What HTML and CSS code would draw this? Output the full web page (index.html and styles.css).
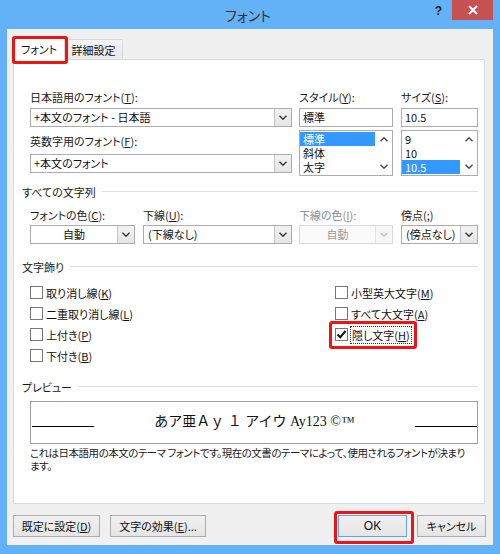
FILE: index.html
```html
<!DOCTYPE html>
<html lang="ja">
<head>
<meta charset="utf-8">
<title>フォント</title>
<link rel="stylesheet" href="styles.css">
</head>
<body>
<div class="window">
  <div class="titlebar">
    <div></div>
    <div class="title">フォント</div>
    <div class="controls">
      <span class="help">?</span>
      <span class="close"><svg width="10" height="10" viewBox="0 0 10 10"><path d="M1 1L9 9M9 1L1 9" stroke="#fff" stroke-width="2" fill="none"/></svg></span>
    </div>
  </div>
  <div class="client">
    <div class="tabs">
      <div class="tab active">フォント<span class="hl hl-tab"></span></div>
      <div class="tab">詳細設定</div>
    </div>
    <div class="panel">
      <div class="fontgrid">
        <div class="col col-font">
          <div class="label">日本語用のフォント(<u>T</u>):</div>
          <div class="combo mt4"><span class="value">+本文のフォント - 日本語</span><span class="arrow"><svg width="8" height="5" viewBox="0 0 8 5"><polyline points="0.5,0.7 4,4.2 7.5,0.7" fill="none" stroke="#333" stroke-width="1.4"/></svg></span></div>
          <div class="label mt7">英数字用のフォント(<u>F</u>):</div>
          <div class="combo mt6"><span class="value">+本文のフォント</span><span class="arrow"><svg width="8" height="5" viewBox="0 0 8 5"><polyline points="0.5,0.7 4,4.2 7.5,0.7" fill="none" stroke="#333" stroke-width="1.4"/></svg></span></div>
        </div>
        <div class="col col-style">
          <div class="label">スタイル(<u>Y</u>):</div>
          <div class="textbox mt4">標準</div>
          <div class="listbox">
            <div class="items">
              <div class="item sel">標準</div>
              <div class="item">斜体</div>
              <div class="item">太字</div>
            </div>
            <div class="scroll">
              <span class="sbtn"><svg width="8" height="5" viewBox="0 0 8 5"><polyline points="0.5,4.3 4,0.8 7.5,4.3" fill="none" stroke="#444" stroke-width="1.4"/></svg></span>
              <span class="sbtn"><svg width="8" height="5" viewBox="0 0 8 5"><polyline points="0.5,0.7 4,4.2 7.5,0.7" fill="none" stroke="#444" stroke-width="1.4"/></svg></span>
            </div>
          </div>
        </div>
        <div class="col col-size">
          <div class="label">サイズ(<u>S</u>):</div>
          <div class="textbox mt4">10.5</div>
          <div class="listbox">
            <div class="items">
              <div class="item">9</div>
              <div class="item">10</div>
              <div class="item sel">10.5</div>
            </div>
            <div class="scroll">
              <span class="sbtn"><svg width="8" height="5" viewBox="0 0 8 5"><polyline points="0.5,4.3 4,0.8 7.5,4.3" fill="none" stroke="#444" stroke-width="1.4"/></svg></span>
              <span class="sbtn"><svg width="8" height="5" viewBox="0 0 8 5"><polyline points="0.5,0.7 4,4.2 7.5,0.7" fill="none" stroke="#444" stroke-width="1.4"/></svg></span>
            </div>
          </div>
        </div>
      </div>

      <div class="heading h-all">すべての文字列</div>
      <div class="row4">
        <div class="field f-color">
          <div class="label">フォントの色(<u>C</u>):</div>
          <div class="combo mt3"><span class="value center">自動</span><span class="arrow"><svg width="8" height="5" viewBox="0 0 8 5"><polyline points="0.5,0.7 4,4.2 7.5,0.7" fill="none" stroke="#333" stroke-width="1.4"/></svg></span></div>
        </div>
        <div class="field f-under">
          <div class="label">下線(<u>U</u>):</div>
          <div class="combo mt3"><span class="value pad">(下線なし)</span><span class="arrow"><svg width="8" height="5" viewBox="0 0 8 5"><polyline points="0.5,0.7 4,4.2 7.5,0.7" fill="none" stroke="#333" stroke-width="1.4"/></svg></span></div>
        </div>
        <div class="field f-ucolor">
          <div class="label disabled">下線の色(<u>I</u>):</div>
          <div class="combo mt3 off"><span class="value center">自動</span><span class="arrow"><svg width="8" height="5" viewBox="0 0 8 5"><polyline points="0.5,0.7 4,4.2 7.5,0.7" fill="none" stroke="#c4c4c4" stroke-width="1.4"/></svg></span></div>
        </div>
        <div class="field f-dot">
          <div class="label">傍点(<u>;</u>)</div>
          <div class="combo mt3"><span class="value pad">(傍点なし)</span><span class="arrow"><svg width="8" height="5" viewBox="0 0 8 5"><polyline points="0.5,0.7 4,4.2 7.5,0.7" fill="none" stroke="#333" stroke-width="1.4"/></svg></span></div>
        </div>
      </div>

      <div class="heading h-deco">文字飾り</div>
      <div class="checks">
        <div class="ccol ccol-left">
          <div class="check"><span class="box"></span><span class="ctext">取り消し線(<u>K</u>)</span></div>
          <div class="check"><span class="box"></span><span class="ctext">二重取り消し線(<u>L</u>)</span></div>
          <div class="check"><span class="box"></span><span class="ctext">上付き(<u>P</u>)</span></div>
          <div class="check"><span class="box"></span><span class="ctext">下付き(<u>B</u>)</span></div>
        </div>
        <div class="ccol">
          <div class="check"><span class="box"></span><span class="ctext">小型英大文字(<u>M</u>)</span></div>
          <div class="check"><span class="box"></span><span class="ctext">すべて大文字(<u>A</u>)</span></div>
          <div class="check hidden-text"><span class="box"><svg width="11" height="11" viewBox="0 0 11 11"><polyline points="1.5,5.5 4.2,8.3 9.5,2" fill="none" stroke="#111" stroke-width="2"/></svg></span><span class="ctext focus">隠し文字(<u>H</u>)</span><span class="hl hl-check"></span></div>
        </div>
      </div>

      <div class="heading h-prev">プレビュー</div>
      <div class="preview">
        <span class="pline"></span>
        <span class="ptext">あア亜Ａｙ １ アイウ Ay123 ©™</span>
        <span class="pline"></span>
      </div>
      <div class="desc">これは日本語用の本文のテーマ フォントです。現在の文書のテーマによって、使用されるフォントが決まり<br>ます。</div>
    </div>

    <div class="buttons">
      <div class="btn b-default">既定に設定(<u>D</u>)</div>
      <div class="btn b-effect">文字の効果(<u>E</u>)...</div>
      <div class="spacer"></div>
      <div class="btn b-ok">OK<span class="hl hl-ok"></span></div>
      <div class="btn b-cancel">キャンセル</div>
    </div>
  </div>
</div>
</body>
</html>
```
FILE: styles.css
```css
* { box-sizing: border-box; }
html, body { margin: 0; padding: 0; }
body {
  width: 500px;
  height: 554px;
  overflow: hidden;
  font-family: "Noto Sans CJK JP", "Noto Sans", sans-serif;
  font-size: 11px;
  font-feature-settings: "palt";
  color: #111;
}
u { text-decoration: underline; text-underline-offset: 1px; }

.window {
  width: 500px;
  height: 554px;
  background: #63b2f8;
  display: flex;
  flex-direction: column;
}

.titlebar {
  flex: none;
  height: 29px;
  display: grid;
  grid-template-columns: 1fr auto 1fr;
}
.title {
  font-size: 14px;
  line-height: 30px;
  color: #333;
  padding-right: 4px;
}
.controls {
  justify-self: end;
  display: flex;
  align-items: flex-start;
}
.help {
  font-family: "Liberation Sans", sans-serif;
  font-weight: bold;
  font-size: 12px;
  line-height: 12px;
  margin-top: 5px;
  margin-right: 10px;
  color: #1a1a1a;
}
.close {
  width: 41px;
  height: 20px;
  margin-right: 7px;
  background: #c75050;
  display: flex;
  align-items: center;
  justify-content: center;
}

.client {
  flex: 1;
  margin: 0 7px 9px;
  background: #f0f0f0;
  display: flex;
  flex-direction: column;
}

.tabs {
  flex: none;
  height: 30px;
  display: flex;
  align-items: flex-end;
  padding-left: 6px;
}
.tab {
  position: relative;
  text-align: center;
  border: 1px solid #d9d9d9;
  border-bottom: 0;
}
.tab.active {
  width: 52px;
  height: 23px;
  margin-bottom: -1px;
  background: #fff;
  z-index: 1;
  line-height: 22px;
}
.tab:not(.active) {
  width: 58px;
  height: 20px;
  border-left: 0;
  background: linear-gradient(#f3f3f3, #e9e9e9);
  line-height: 20px;
}

.hl {
  position: absolute;
  border: 3px solid #ee1414;
  border-radius: 3px;
  pointer-events: none;
  z-index: 5;
}
.hl-tab { left: -2px; top: -2px; width: 56px; height: 28px; }
.hl-check { left: -6px; top: -3px; width: 88px; height: 28px; }
.hl-ok { left: -5px; top: -5px; width: 80px; height: 33px; }

.panel {
  flex: none;
  margin-left: 6px;
  width: 472px;
  height: 445px;
  background: #fff;
  border: 1px solid #d9d9d9;
  padding: 30px 6px 0 8px;
}

.label { line-height: 14px; height: 14px; white-space: nowrap; color: #1a1a1a; }
.label.disabled { color: #8d8d8d; }
.mt3 { margin-top: 3px; }
.mt4 { margin-top: 4px; }
.mt6 { margin-top: 6px; }
.mt7 { margin-top: 7px; }

.fontgrid { margin-left: 8px; display: flex; }
.col { display: flex; flex-direction: column; }
.col-font { width: 262px; }
.col-style { width: 94px; margin-left: 7px; }
.col-size { width: 77px; margin-left: 8px; }

.combo {
  display: flex;
  height: 19px;
  border: 1px solid #acacac;
  background: #fff;
}
.combo .value {
  flex: 1;
  padding-left: 3px;
  line-height: 17px;
  white-space: nowrap;
  overflow: hidden;
}
.combo .value.center { text-align: center; padding-left: 0; }
.combo .value.pad { padding-left: 4px; }
.combo .arrow {
  width: 17px;
  border-left: 1px solid #c4c4c4;
  background: linear-gradient(#f2f2f2, #e5e5e5);
  display: flex;
  align-items: center;
  justify-content: center;
}
.combo.off { border-color: #d9d9d9; background: #fafafa; }
.combo.off .value { color: #9a9a9a; }
.combo.off .arrow { background: #f6f6f6; border-left-color: #e4e4e4; }

.textbox {
  height: 19px;
  border: 1px solid #acacac;
  background: #fff;
  padding-left: 3px;
  line-height: 17px;
}
.listbox {
  margin-top: 3px;
  height: 46px;
  border: 1px solid #acacac;
  background: #fff;
  display: flex;
}
.items { flex: 1; padding-top: 1px; }
.item { height: 14px; line-height: 14px; padding-left: 3px; overflow: hidden; }
.item.sel { background: #3399ff; color: #fff; }
.scroll {
  width: 17px;
  display: flex;
  flex-direction: column;
  justify-content: space-between;
}
.sbtn {
  height: 17px;
  display: flex;
  align-items: center;
  justify-content: center;
}

.heading {
  display: flex;
  align-items: center;
  line-height: 14px;
  height: 14px;
  color: #1a1a1a;
}
.heading::after {
  content: "";
  flex: 1;
  height: 1px;
  background: #dedede;
  margin-left: 6px;
  margin-top: -2px;
}
.h-all { margin-top: 9px; }
.h-deco { margin-top: 16px; }
.h-prev { margin-top: 14px; }

.row4 { margin-left: 8px; margin-top: 9px; display: flex; }
.field { display: flex; flex-direction: column; }
.f-color { width: 105px; }
.f-under { width: 149px; margin-left: 8px; }
.f-ucolor { width: 94px; margin-left: 7px; }
.f-dot { width: 77px; margin-left: 8px; }

.checks { margin-left: 8px; margin-top: 8px; display: flex; }
.ccol { display: flex; flex-direction: column; }
.ccol-left { width: 305px; }
.check {
  position: relative;
  display: flex;
  align-items: center;
  height: 21px;
  white-space: nowrap;
}
.box {
  width: 13px;
  height: 13px;
  border: 1px solid #777;
  background: #fff;
  margin-right: 3px;
  display: flex;
  align-items: center;
  justify-content: center;
}
.ctext { line-height: 14px; }
.ctext.focus {
  border: 1px dotted #333;
  padding: 1px 1px;
  margin-left: -1px;
}

.preview {
  margin-left: 8px;
  margin-top: 7px;
  width: 448px;
  height: 43px;
  border: 1px solid #a0a0a0;
  display: flex;
  align-items: flex-end;
  justify-content: space-between;
  padding: 0 0 13px 1px;
}
.pline { width: 62px; height: 1px; background: #000; margin-bottom: 3px; }
.ptext {
  font-family: "Liberation Serif", "Noto Sans CJK JP", serif;
  font-feature-settings: normal;
  font-size: 14px;
  line-height: 16px;
  color: #111;
  white-space: nowrap;
}

.desc {
  margin-left: 8px;
  margin-top: 2px;
  width: 450px;
  font-size: 10.5px;
  letter-spacing: -0.5px;
  line-height: 13px;
  white-space: nowrap;
  overflow: hidden;
  color: #1a1a1a;
}

.buttons {
  flex: none;
  margin-top: 11px;
  padding: 0 7px 0 6px;
  display: flex;
  height: 22px;
}
.btn {
  position: relative;
  height: 22px;
  border: 1px solid #acacac;
  background: linear-gradient(#f0f0f0, #e5e5e5);
  text-align: center;
  line-height: 20px;
  white-space: nowrap;
  color: #111;
}
.b-default { width: 87px; }
.b-effect { width: 96px; margin-left: 10px; }
.spacer { flex: 1; }
.b-ok { width: 69px; border-color: #5ea6ea; font-family: "Liberation Sans", sans-serif; font-size: 12px; }
.b-cancel { width: 69px; margin-left: 10px; }
```
